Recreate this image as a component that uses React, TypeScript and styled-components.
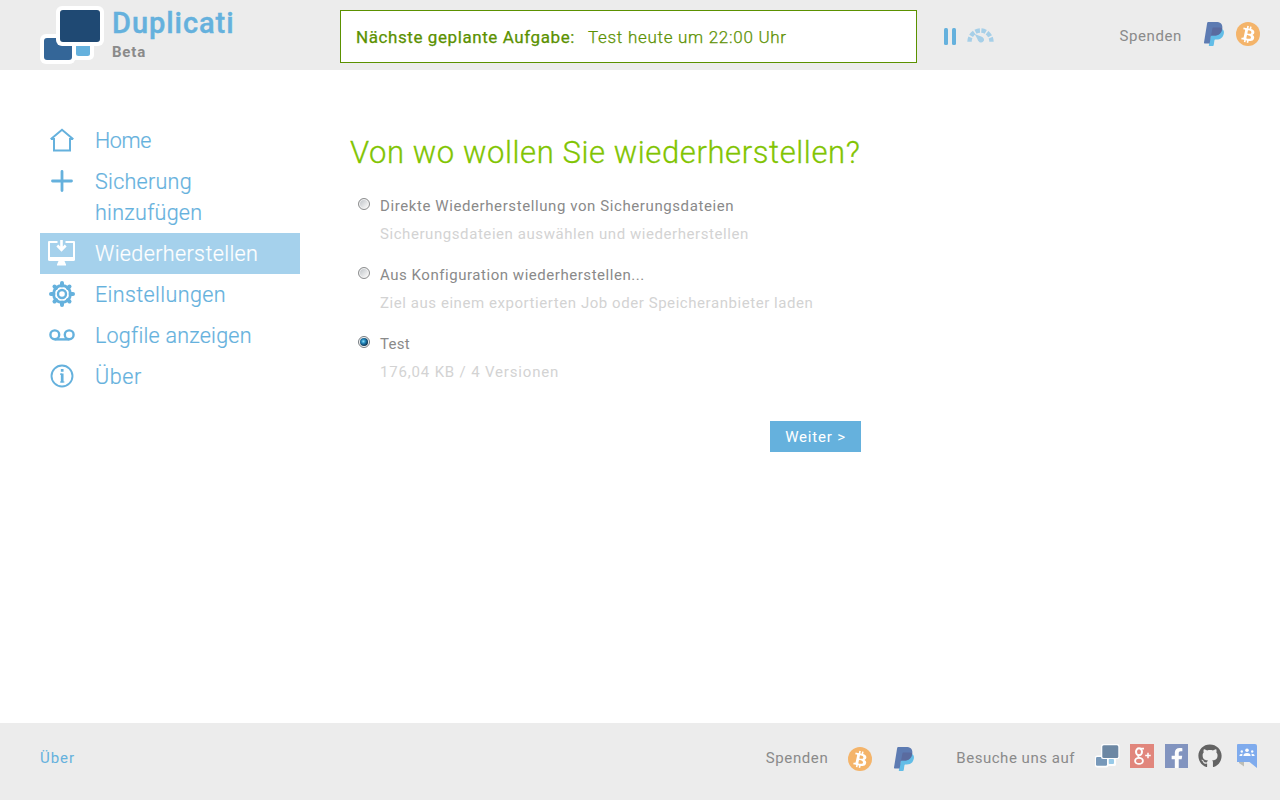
import React from 'react';
import styled, { createGlobalStyle } from 'styled-components';
import { FaGithub, FaFacebookF, FaBtc } from 'react-icons/fa';

const GlobalStyle = createGlobalStyle`
  *, *::before, *::after { box-sizing: border-box; }
  body {
    margin: 0;
    background: #fff;
    color: #8a8a8a;
    font-family: Roboto, 'Liberation Sans', sans-serif;
    font-size: 15px;
    letter-spacing: 0.6px;
  }
  svg { display: block; flex: none; }
`;

const Page = styled.div`
  display: flex;
  flex-direction: column;
  height: 800px;
  width: 1280px;
  overflow: hidden;
`;

const Header = styled.header`
  display: flex;
  flex: none;
  height: 70px;
  padding: 0 20px 0 40px;
  background: #ececec;
`;

const Brand = styled.div`
  display: flex;
  gap: 8px;
  width: 300px;
  padding-top: 6px;
`;

const BrandName = styled.div`
  font-size: 29px;
  font-weight: 500;
  line-height: 34px;
  letter-spacing: 0.95px;
  -webkit-text-stroke: 0.4px #65b1dd;
  color: #65b1dd;
`;

const Channel = styled.div`
  margin-top: 3px;
  font-weight: 700;
  line-height: 18px;
  letter-spacing: 0.8px;
`;

const StatusBox = styled.div`
  display: flex;
  align-items: center;
  width: 577px;
  height: 53px;
  margin-top: 10px;
  padding: 1px 15px 0;
  border: 1px solid #5b9100;
  background: #fff;
  color: #5b9100;
  font-size: 17px;
  white-space: nowrap;
`;

const StatusLabel = styled.span`
  width: 232px;
  font-weight: 400;
  letter-spacing: 0.58px;
  -webkit-text-stroke: 0.25px #5b9100;
`;

const StatusText = styled.span`
  font-weight: 300;
  letter-spacing: 0.71px;
  -webkit-text-stroke: 0.25px #5b9100;
`;

const Controls = styled.div`
  display: flex;
  gap: 11px;
  margin: 28px auto 0 27px;
`;

const HeaderDonate = styled.div`
  display: flex;
  align-items: flex-start;
  padding-top: 22px;
`;

const DonateLabel = styled.span<{ $gap: number }>`
  margin-right: ${(p) => p.$gap}px;
  line-height: 28px;
  letter-spacing: 0.6px;
`;

const HeaderIcons = styled.div`
  display: flex;
  gap: 12px;
`;

const Body = styled.div`
  display: flex;
  flex: 1;
  padding: 50px 0 0 40px;
`;

const Menu = styled.nav`
  width: 260px;
`;

const MenuItem = styled.a<{ $active?: boolean }>`
  display: flex;
  padding: 5px 8px;
  background: ${(p) => (p.$active ? '#a5d1ec' : 'transparent')};
  color: ${(p) => (p.$active ? '#fff' : '#65b1dd')};
`;

const MenuIcon = styled.span`
  display: flex;
  align-items: center;
  justify-content: center;
  width: 27px;
  height: 29px;
  margin-right: 20px;
`;

const MenuLabel = styled.span<{ $spacing: number }>`
  width: 160px;
  font-size: 21.5px;
  font-weight: 300;
  line-height: 31px;
  white-space: pre;
  letter-spacing: ${(p) => p.$spacing}px;
  -webkit-text-stroke: 0.2px currentColor;
`;

const Content = styled.main`
  width: 521px;
  margin-left: 40px;
  padding: 13px 0 0 10px;
`;

const Title = styled.h1`
  margin: 0 0 19px;
  color: #81c401;
  font-size: 31px;
  font-weight: 300;
  line-height: 40px;
  letter-spacing: 0.6px;
  white-space: nowrap;
  -webkit-text-stroke: 0.3px #81c401;
`;

const Option = styled.div`
  display: flex;
  height: 69px;
  padding-left: 8px;
`;

const Radio = styled.span<{ $checked?: boolean }>`
  display: flex;
  align-items: center;
  justify-content: center;
  width: 12px;
  height: 12px;
  margin: 6px 10px 0 0;
  border: 1px solid ${(p) => (p.$checked ? '#777d82' : '#8c8d8e')};
  border-radius: 50%;
  background: ${(p) => (p.$checked ? '#f7f9fa' : 'linear-gradient(135deg, #b9bec3, #f4f4f4 80%)')};
  box-shadow: inset 0 0 0 1px #f4f4f4;
  &::after {
    content: '';
    width: 8px;
    height: 8px;
    border-radius: 50%;
    background: ${(p) => (p.$checked ? 'radial-gradient(circle at 42% 42%, #8fe1fa 0, #2388bd 30%, #0c3453 70%)' : 'none')};
  }
`;

const OptionText = styled.div`
  line-height: 28px;
  white-space: nowrap;
`;

const OptionName = styled.div<{ $spacing: number }>`
  letter-spacing: ${(p) => p.$spacing}px;
`;

const OptionHint = styled(OptionName)`
  color: #d3d3d3;
`;

const Actions = styled.div`
  display: flex;
  justify-content: flex-end;
  margin-top: 22px;
`;

const NextButton = styled.button`
  width: 91px;
  height: 31px;
  padding: 0;
  border: 0;
  background: #65b1dd;
  color: #fff;
  font: inherit;
  letter-spacing: 0.8px;
`;

const Footer = styled.footer`
  display: flex;
  flex: none;
  height: 77px;
  padding: 21px 23px 0 40px;
  background: #ececec;
`;

const FooterLink = styled.a`
  margin-right: auto;
  color: #65b1dd;
  line-height: 28px;
  letter-spacing: 0.95px;
`;

const FooterIcons = styled.div`
  display: flex;
  gap: 22px;
  padding-top: 3px;
`;

const VisitLabel = styled.span`
  margin: 0 20px 0 42px;
  line-height: 28px;
  letter-spacing: 0.53px;
`;

const SocialIcons = styled.div`
  display: flex;
  opacity: 0.9;
`;

const SocialLink = styled.a<{ $gap: number }>`
  margin-left: ${(p) => p.$gap}px;
  color: #555;
`;

const Coin = styled.span`
  display: flex;
  align-items: center;
  justify-content: center;
  width: 24px;
  height: 24px;
  border-radius: 50%;
  background: #f4b46a;
  color: #fff;
  svg { transform: rotate(12deg); }
`;

const FacebookTile = styled.span`
  display: flex;
  align-items: flex-end;
  justify-content: flex-end;
  width: 23px;
  height: 24px;
  padding-right: 1px;
  overflow: hidden;
  background: #778bbb;
  color: #fff;
`;

const Logo = () => (
  <svg width="64" height="58" viewBox="0 0 64 58">
    <rect x="30" y="34" width="24" height="20" rx="5" fill="#fff" />
    <rect x="36" y="38" width="14" height="12" rx="2.5" fill="#65b1dd" />
    <rect x="0" y="28" width="35.5" height="30" rx="6" fill="#fff" />
    <rect x="4" y="32" width="28" height="22" rx="3" fill="#346698" />
    <rect x="16" y="0" width="48" height="40" rx="6" fill="#fff" />
    <rect x="20" y="4" width="40" height="32" rx="3" fill="#1f4973" />
  </svg>
);

const SmallLogo = () => (
  <svg width="25" height="24" viewBox="0 0 25 24">
    <rect x="12" y="14" width="9" height="8" rx="1.5" fill="#fff" />
    <rect x="13.5" y="15" width="5.5" height="5" rx="1" fill="#8fc7e8" />
    <rect x="0" y="11.5" width="13.5" height="12" rx="2" fill="#fff" />
    <rect x="1" y="13" width="11" height="8.7" rx="1.2" fill="#6b90b4" />
    <rect x="6" y="0" width="18.5" height="15" rx="2" fill="#fff" />
    <rect x="7.3" y="1.3" width="16" height="12.6" rx="1.5" fill="#5f7d9c" />
  </svg>
);

const Paypal = () => (
  <svg width="20" height="24" viewBox="0 0 20 24">
    <path d="M8 7H18.2C19.8 8.1 20.2 9.6 19.8 11.7C19 15.6 16.4 17.5 12.7 17.5H11.3C10.8 17.5 10.5 17.9 10.4 18.4L9.7 23.2C9.6 23.8 9.3 24 8.9 24H5.3C4.9 24 4.7 23.7 4.8 23.3Z" fill="#62bde7" />
    <path d="M3.2.8C3.3.3 3.7 0 4.2 0H12C16.9 0 19 2.4 18.2 6.9C17.4 11.4 14.7 13.6 10.3 13.6H7.9C7.3 13.6 6.9 14 6.8 14.6L5.7 21.4H.6C.1 21.4-.1 21.1 0 20.6Z" fill="#5d7bb2" />
    <path d="M8.5 6C8.6 5.6 8.9 5.4 9.3 5.4H15.5C16.6 5.5 17.5 5.8 18.2 6.3C17.5 11.3 14.8 13.6 10.3 13.6H7.9C7.5 13.6 7.2 13.7 7 14Z" fill="#5a6b9f" />
  </svg>
);

const Bitcoin = () => (
  <Coin><FaBtc size={17} /></Coin>
);

const Pause = () => (
  <svg width="12" height="17" viewBox="0 0 12 17" fill="#65b1dd">
    <rect width="4" height="17" rx="1.5" />
    <rect x="8" width="4" height="17" rx="1.5" />
  </svg>
);

const Gauge = () => (
  <svg width="27" height="16" viewBox="0 0 27 16">
    <path d="M2.5 13.8A11 11.3 0 0 1 24.5 13.8" fill="none" stroke="#a6cfe8" strokeWidth="4.4" strokeDasharray="4.6 1.5" />
    <path d="M7.6 6L14.8 8.8Q17.6 10.3 16.9 12.8Q15.5 15.4 12.6 14.2Q10.8 13 10.3 10.8Z" fill="#a6cfe8" />
  </svg>
);

const HomeIcon = () => (
  <svg width="24" height="24" viewBox="0 0 24 24" fill="none" stroke="currentColor" strokeWidth="2">
    <path d="M.7 11.3L12 1.7L23.3 11.3M1 11H4V22.5H20V11H23" />
  </svg>
);

const PlusIcon = () => (
  <svg width="22" height="22" viewBox="0 0 22 22" stroke="currentColor" strokeWidth="2.8" strokeLinecap="round">
    <path d="M11 1.5V20.5M1.5 11H20.5" />
  </svg>
);

const RestoreIcon = () => (
  <svg width="27" height="27" viewBox="0 0 27 27" fill="none" stroke="currentColor">
    <path d="M9.5 3H1V20H26V3H17.5" strokeWidth="2" strokeLinejoin="round" />
    <path d="M13.5 1V10M9.3 6.5L13.5 10.8L17.7 6.5" strokeWidth="2.6" />
    <path d="M0 18H27V20.5Q27 22 25.5 22H1.5Q0 22 0 20.5ZM10.5 22H16.5L18 25.5V26.5H9V25.5Z" fill="currentColor" stroke="none" />
  </svg>
);

const SettingsIcon = () => (
  <svg width="26" height="26" viewBox="0 0 26 26" fill="none" stroke="currentColor">
    <circle cx="13" cy="13" r="8.5" strokeWidth="2.8" />
    <circle cx="13" cy="13" r="4" strokeWidth="2.4" />
    <path
      d="M13 4.5V2M13 21.5V24M4.5 13H2M21.5 13H24M7 7L5.5 5.5M19 7L20.5 5.5M7 19L5.5 20.5M19 19L20.5 20.5"
      strokeWidth="4"
      strokeLinecap="round"
    />
  </svg>
);

const LogIcon = () => (
  <svg width="26" height="12" viewBox="0 0 26 12" fill="none" stroke="currentColor" strokeWidth="2.4">
    <circle cx="5.8" cy="5.8" r="4.4" />
    <circle cx="20.2" cy="5.8" r="4.4" />
    <path d="M5.8 10.4H20.2" />
  </svg>
);

const InfoIcon = () => (
  <svg width="24" height="24" viewBox="0 0 24 24" fill="none" stroke="currentColor">
    <circle cx="12" cy="12" r="10.5" strokeWidth="1.9" />
    <path d="M10 10.2H12M10 18H14.4" strokeWidth="1.2" />
    <path d="M12.2 9.6V18.6M12.2 5V7.8" strokeWidth="2.7" />
  </svg>
);

const GooglePlus = () => (
  <svg width="24" height="24" viewBox="0 0 24 24" fill="none" stroke="#fff">
    <rect width="24" height="24" fill="#e07b70" stroke="none" />
    <ellipse cx="9" cy="7.8" rx="3" ry="3.5" strokeWidth="2" />
    <path d="M10.5 4.6H14M8.7 11.2Q7 12.5 10 13.8" strokeWidth="1.6" />
    <ellipse cx="9" cy="16.9" rx="3.9" ry="3" strokeWidth="1.9" />
    <path d="M18 8.7V14.3M15.2 11.5H20.8" strokeWidth="1.5" />
  </svg>
);

const Groups = () => (
  <svg width="20" height="24" viewBox="0 0 20 24">
    <path d="M2 17V19L7 22.5V18Z" fill="#b9b9b0" />
    <path d="M1 0H18Q20 0 20 2V24L12.5 18H0V1Q0 0 1 0Z" fill="#74a5ee" />
    <g fill="#fff">
      <circle cx="10" cy="6.2" r="1.8" />
      <circle cx="4.8" cy="7.5" r="1.2" />
      <circle cx="15.2" cy="7.5" r="1.2" />
      <path d="M6.4 12Q6.4 9 10 9Q13.6 9 13.6 12ZM2.4 12Q2.4 9.8 5.5 9.8L5.2 12ZM17.6 12Q17.6 9.8 14.5 9.8L14.8 12Z" />
    </g>
  </svg>
);

const menu = [
  { label: 'Home', spacing: -0.4, icon: <HomeIcon /> },
  { label: 'Sicherung\nhinzufügen', spacing: 0.28, icon: <PlusIcon /> },
  { label: 'Wiederherstellen', spacing: 0.38, icon: <RestoreIcon />, active: true },
  { label: 'Einstellungen', spacing: 0.38, icon: <SettingsIcon /> },
  { label: 'Logfile anzeigen', spacing: 0.24, icon: <LogIcon /> },
  { label: 'Über', spacing: 0.64, icon: <InfoIcon /> },
];

const options = [
  {
    name: 'Direkte Wiederherstellung von Sicherungsdateien',
    nameSpacing: 0.59,
    hint: 'Sicherungsdateien auswählen und wiederherstellen',
    hintSpacing: 0.57,
  },
  {
    name: 'Aus Konfiguration wiederherstellen...',
    nameSpacing: 0.54,
    hint: 'Ziel aus einem exportierten Job oder Speicheranbieter laden',
    hintSpacing: 0.56,
  },
  { name: 'Test', nameSpacing: 0.3, hint: '176,04 KB / 4 Versionen', hintSpacing: 0.83, checked: true },
];

export default function App() {
  return (
    <Page>
      <GlobalStyle />
      <Header>
        <Brand>
          <Logo />
          <div>
            <BrandName>Duplicati</BrandName>
            <Channel>Beta</Channel>
          </div>
        </Brand>
        <StatusBox>
          <StatusLabel>Nächste geplante Aufgabe:</StatusLabel>
          <StatusText>Test heute um 22:00 Uhr</StatusText>
        </StatusBox>
        <Controls>
          <Pause />
          <Gauge />
        </Controls>
        <HeaderDonate>
          <DonateLabel $gap={22}>Spenden</DonateLabel>
          <HeaderIcons>
            <Paypal />
            <Bitcoin />
          </HeaderIcons>
        </HeaderDonate>
      </Header>
      <Body>
        <Menu>
          {menu.map((item) => (
            <MenuItem key={item.label} $active={item.active}>
              <MenuIcon>{item.icon}</MenuIcon>
              <MenuLabel $spacing={item.spacing}>{item.label}</MenuLabel>
            </MenuItem>
          ))}
        </Menu>
        <Content>
          <Title>Von wo wollen Sie wiederherstellen?</Title>
          {options.map((option) => (
            <Option key={option.name}>
              <Radio $checked={option.checked} />
              <OptionText>
                <OptionName $spacing={option.nameSpacing}>{option.name}</OptionName>
                <OptionHint $spacing={option.hintSpacing}>{option.hint}</OptionHint>
              </OptionText>
            </Option>
          ))}
          <Actions>
            <NextButton>Weiter &gt;</NextButton>
          </Actions>
        </Content>
      </Body>
      <Footer>
        <FooterLink>Über</FooterLink>
        <DonateLabel $gap={20}>Spenden</DonateLabel>
        <FooterIcons>
          <Bitcoin />
          <Paypal />
        </FooterIcons>
        <VisitLabel>Besuche uns auf</VisitLabel>
        <SocialIcons>
          <SocialLink $gap={0}><SmallLogo /></SocialLink>
          <SocialLink $gap={10}><GooglePlus /></SocialLink>
          <SocialLink $gap={11}>
            <FacebookTile><FaFacebookF size={20} /></FacebookTile>
          </SocialLink>
          <SocialLink $gap={10}><FaGithub size={24} /></SocialLink>
          <SocialLink $gap={15}><Groups /></SocialLink>
        </SocialIcons>
      </Footer>
    </Page>
  );
}
